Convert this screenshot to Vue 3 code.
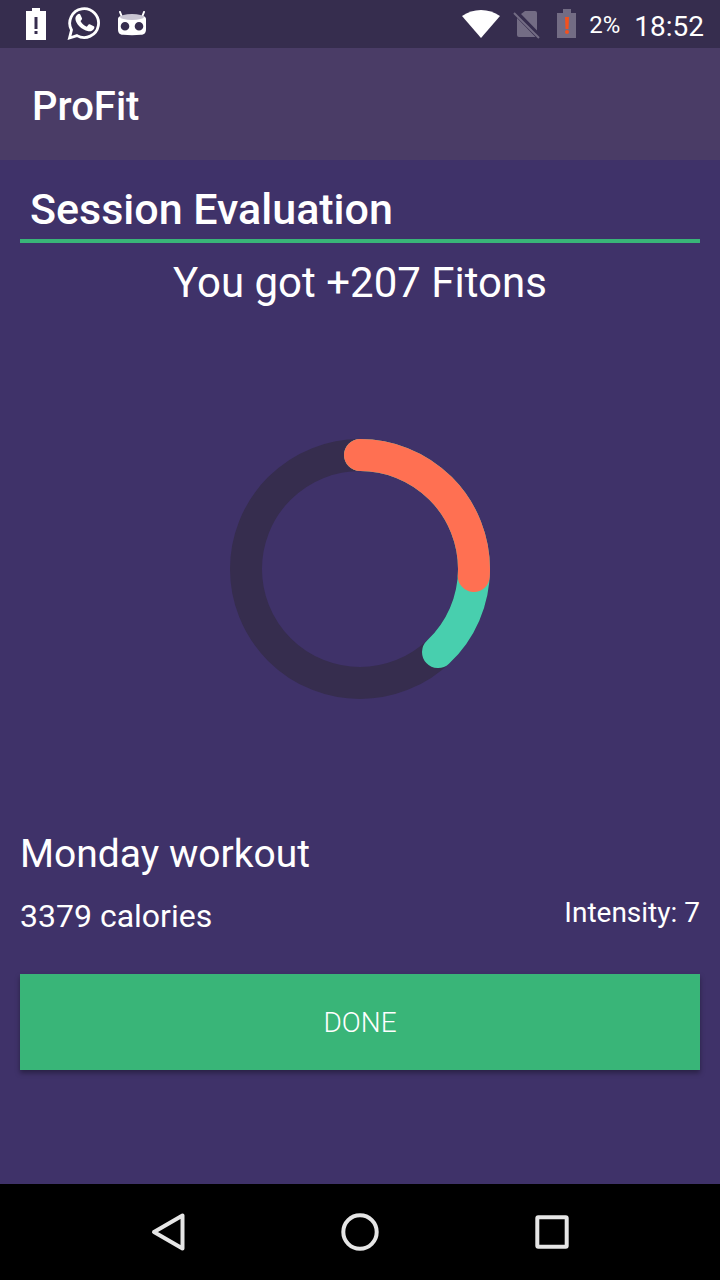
<script setup>
const session = {
  fitons: 207,
  name: 'Monday workout',
  calories: 3379,
  intensity: 7,
}
const progress = { inner: 26, outer: 38 }
</script>

<template>
  <div class="screen">
    <header class="status-bar">
      <div class="notifications">
        <svg class="icon-battery" width="20" height="32" viewBox="0 0 20 32" aria-label="Battery low">
          <path fill="#fff" fill-rule="evenodd" d="M6 0h8v3h6v29H0V3h6zM8.500 9v12h3V9zM8.500 23v3h3v-3z" />
        </svg>
        <svg class="icon-chat" width="34" height="36" viewBox="0 0 34 36" aria-label="Message">
          <path
            fill="none" stroke="#fff" stroke-width="2.800"
            d="M2.500 32l2-8A14.400 14.400 0 1 1 10 29.600z"
          />
          <path
            fill="#fff"
            d="M10.800 8.300c.7-.8 1.900-.9 2.500.1l1.700 3.800c.3.7-.3 1.600-1.500 2.900 1.500 2.800 3.600 4.700 6.300 5.700l1.800-2.200c.5-.5 1-.4 1.600-.1l3.600 1.800c.7.4.7.9.4 1.900-.7 2.200-3.400 3.500-5.800 3.100-7.300-1.500-12.700-7.600-13-12.500-.1-1.800.9-3.400 2.400-4.500z"
          />
        </svg>
        <svg class="icon-robot" width="28" height="26" viewBox="0 0 28 26" aria-label="System">
          <path stroke="#fff" stroke-width="2" stroke-linecap="round" d="M2 1l2 5M26 1l-2 5" />
          <path
            fill="#fff" fill-rule="evenodd"
            d="M0 8c0-1.500 1-2.500 2.500-2.800h23C27 5.500 28 6.500 28 8v10c0 4-1.500 5.500-5 5.800-6 .5-12 .5-18 0C1.500 23.500 0 22 0 18zM7 11a4.300 4.300 0 1 0 0 8.600 4.300 4.300 0 0 0 0-8.600zM21 11a4.300 4.300 0 1 0 0 8.600 4.300 4.300 0 0 0 0-8.600z"
          />
          <ellipse cx="14" cy="6" rx="12" ry="3" fill="#c9c5d2" />
        </svg>
      </div>
      <div class="indicators">
        <svg width="40" height="30" viewBox="0 0 40 30" aria-label="Wi-Fi">
          <path fill="#fff" d="M1 7C12-1 28-1 39 7L20 29z" />
        </svg>
        <svg class="icon-sim" width="28" height="30" viewBox="0 0 28 30" aria-label="No SIM">
          <path fill="#736c84" d="M8 5l4-3h10q2 0 2 2v17.500zM4 9l18.500 19H6q-2 0-2-2z" />
          <path stroke="#736c84" stroke-width="2" d="M1 4l25 25" />
        </svg>
        <svg class="icon-charge" width="20" height="30" viewBox="0 0 20 30" aria-label="Battery">
          <path fill="#736c84" d="M6 0h8v4h5v25H0V4h6z" />
          <path fill="#f4511e" d="M8 8h4l-.5 12h-3z" />
          <circle cx="10" cy="23" r="2" fill="#f4511e" />
        </svg>
        <span class="percent">2%</span>
        <time class="clock">18:52</time>
      </div>
    </header>

    <div class="toolbar">ProFit</div>

    <main class="content">
      <h1 class="title">Session Evaluation</h1>
      <p class="reward">You got +{{ session.fitons }} Fitons</p>

      <div class="chart">
        <svg width="260" height="260" viewBox="0 0 260 260" role="img" aria-label="Session progress">
          <g fill="none" stroke-width="32" stroke-linecap="round" transform="rotate(-90 130 130)">
            <circle cx="130" cy="130" r="114" stroke="#362d4e" />
            <circle
              cx="130" cy="130" r="114" stroke="#48cfae" pathLength="100"
              :stroke-dasharray="`${progress.outer} 100`"
            />
            <circle
              cx="130" cy="130" r="114" stroke="#ff7052" pathLength="100"
              :stroke-dasharray="`${progress.inner} 100`"
            />
          </g>
        </svg>
      </div>

      <h2 class="workout">{{ session.name }}</h2>
      <div class="stats">
        <span class="calories">{{ session.calories }} calories</span>
        <span class="intensity">Intensity: {{ session.intensity }}</span>
      </div>
      <button class="done" type="button">DONE</button>
    </main>

    <nav class="nav-bar">
      <button type="button" aria-label="Back">
        <svg width="40" height="40" viewBox="0 0 40 40">
          <path d="M34.500 3.500v33L6 20z" />
        </svg>
      </button>
      <button type="button" aria-label="Home">
        <svg width="40" height="40" viewBox="0 0 40 40">
          <circle cx="20" cy="20" r="16.700" />
        </svg>
      </button>
      <button type="button" aria-label="Recent apps">
        <svg width="40" height="40" viewBox="0 0 40 40">
          <rect x="5.300" y="5.300" width="29.400" height="29.400" rx="1" />
        </svg>
      </button>
    </nav>
  </div>
</template>

<style>
body {
  background: #3f3269;
}
</style>

<style scoped>
.screen {
  display: flex;
  flex-direction: column;
  min-height: 100vh;
  background: #3f3269;
  color: #fff;
  font-family: Roboto, "Liberation Sans", sans-serif;
}
.status-bar {
  display: flex;
  justify-content: space-between;
  height: 48px;
  padding: 0 16px 0 26px;
  background: #362d4e;
}
.notifications,
.indicators {
  display: flex;
  align-items: center;
}
.icon-chat {
  margin-left: 21px;
}
.icon-robot {
  margin-left: 17px;
}
.icon-sim {
  margin-left: 12px;
}
.icon-charge {
  margin-left: 16px;
}
.percent {
  margin-left: 12px;
  padding-top: 2px;
  font-size: 24px;
}
.clock {
  margin-left: 14px;
  padding-top: 4px;
  font-size: 28px;
}
.toolbar {
  display: flex;
  align-items: center;
  height: 112px;
  padding: 4px 32px 0;
  box-sizing: border-box;
  background: #4a3c66;
  font-size: 40px;
  font-weight: 500;
}
.content {
  display: flex;
  flex: 1;
  flex-direction: column;
  padding: 20px 20px 114px;
}
.title {
  margin: 0;
  padding: 0 10px 1px;
  border-bottom: 4px solid #39b578;
  font-size: 43px;
  font-weight: 500;
  line-height: 58px;
}
.reward {
  margin: 10px 0 0;
  font-size: 42px;
  font-weight: 400;
  line-height: 60px;
  text-align: center;
}
.chart {
  display: flex;
  flex: 1;
  align-items: center;
  justify-content: center;
}
.chart svg {
  display: block;
}
.workout {
  margin: 0;
  font-size: 39px;
  font-weight: 400;
  line-height: 60px;
}
.stats {
  display: flex;
  align-items: flex-start;
  justify-content: space-between;
  margin: 8px 0 34px;
}
.calories {
  font-size: 32px;
  font-weight: 400;
  line-height: 48px;
}
.intensity {
  font-size: 28px;
  font-weight: 400;
  line-height: 42px;
}
.done {
  height: 96px;
  border: 0;
  padding: 0;
  background: #39b578;
  box-shadow: 0 3px 5px rgba(0, 0, 0, 0.35);
  color: #fff;
  font-family: inherit;
  font-size: 28px;
  font-weight: 300;
}
.nav-bar {
  display: flex;
  height: 96px;
  padding: 0 10%;
  background: #000;
}
.nav-bar button {
  display: flex;
  flex: 1;
  align-items: center;
  justify-content: center;
  border: 0;
  padding: 0;
  background: none;
}
.nav-bar svg {
  fill: none;
  stroke: #e6e6e6;
  stroke-width: 4;
  stroke-linejoin: round;
}
</style>
